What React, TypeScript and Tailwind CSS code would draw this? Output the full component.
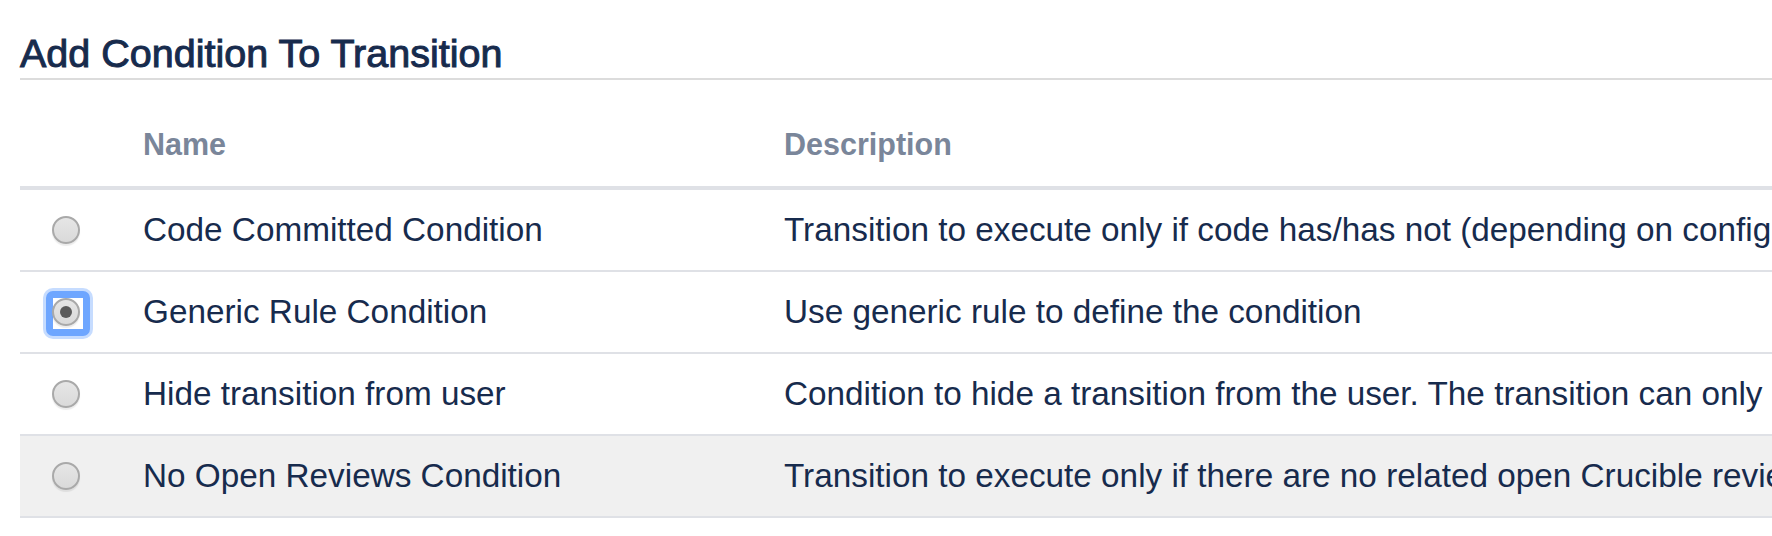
// Workflow editor: "Add Condition To Transition" picker table.

const CONDITIONS = [
  {
    id: 'code-committed',
    name: 'Code Committed Condition',
    description:
      'Transition to execute only if code has/has not (depending on configuration) been committed to this issue.',
  },
  {
    id: 'generic-rule',
    name: 'Generic Rule Condition',
    description: 'Use generic rule to define the condition',
  },
  {
    id: 'hide-transition',
    name: 'Hide transition from user',
    description:
      'Condition to hide a transition from the user. The transition can only be triggered from a workflow function or service.',
  },
  {
    id: 'no-open-reviews',
    name: 'No Open Reviews Condition',
    description: 'Transition to execute only if there are no related open Crucible reviews.',
  },
]

const SELECTED = 'generic-rule'
const HOVERED = 'no-open-reviews'

function Radio({ checked }: { checked: boolean }) {
  return (
    <span className="relative inline-flex h-[28px] w-[28px]">
      {checked && (
        <span
          className="absolute left-[-6px] top-[-7px] h-[45px] w-[44px] rounded-[7px] border-[7px] border-[#6ea6ff] bg-white shadow-[0_0_0_3px_#c6dcff]"
          aria-hidden
        />
      )}
      <span className="relative flex h-[28px] w-[28px] items-center justify-center rounded-full border-2 border-[#a9a9a9] bg-[linear-gradient(180deg,#e6e6e6_0%,#dadada_100%)] shadow-[0_2px_1px_rgba(0,0,0,0.08)]">
        {checked && <span className="h-[12px] w-[12px] rounded-full bg-[#5b5b5b]" />}
      </span>
    </span>
  )
}

export default function App() {
  return (
    <div
      className="min-h-screen w-full overflow-hidden bg-white pl-[20px] text-[#172b4d]"
      style={{ fontFamily: '"Liberation Sans", Arial, sans-serif' }}
    >
      {/* Heading */}
      <h2 className="border-b-2 border-[#dcdcdc] pb-[2px] pt-[31px] text-[39.5px] font-medium leading-[45px] [-webkit-text-stroke:1px_#172b4d]">
        Add Condition To Transition
      </h2>

      {/* Table */}
      <div className="w-full">
        <div className="grid h-[110px] grid-cols-[123px_641px_1fr] items-end border-b-4 border-[#dfe1e6] pb-[25px] text-[30.5px] font-bold leading-[34px] text-[#7a869a]">
          <span />
          <span>Name</span>
          <span>Description</span>
        </div>

        {CONDITIONS.map((c) => (
          <div
            key={c.id}
            className={`grid h-[82px] grid-cols-[123px_641px_1fr] items-center border-b-2 border-[#dfe1e6] text-[33.3px] leading-[38px] ${
              c.id === HOVERED ? 'bg-[#f0f0f0]' : 'bg-white'
            }`}
          >
            <span className="flex pl-[32px]">
              <Radio checked={c.id === SELECTED} />
            </span>
            <span className="whitespace-nowrap">{c.name}</span>
            <span className="min-w-0 overflow-hidden whitespace-nowrap">{c.description}</span>
          </div>
        ))}
      </div>
    </div>
  )
}
